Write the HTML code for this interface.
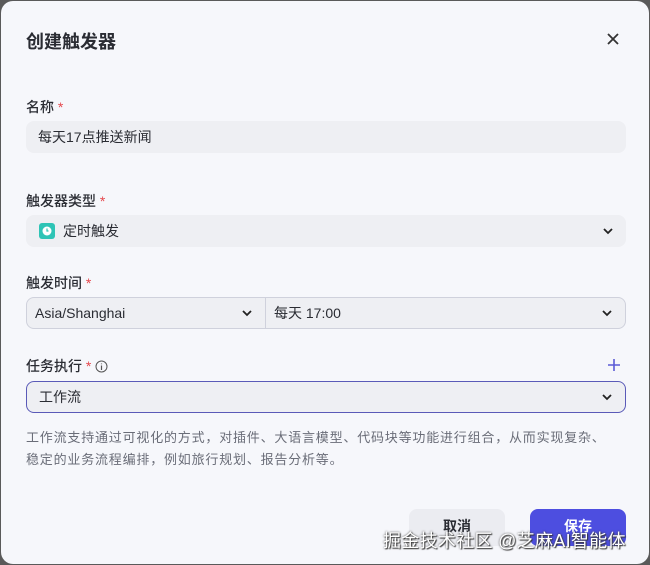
<!DOCTYPE html>
<html><head><meta charset="utf-8"><style>
*{box-sizing:border-box;margin:0;padding:0}
html,body{width:650px;height:565px;overflow:hidden;background:#5a5a5a;font-family:"Liberation Sans","Noto Sans CJK SC",sans-serif}
.dlg{position:absolute;left:1px;top:1px;width:648px;height:563px;background:#f6f7fb;border-radius:12px;overflow:hidden;color:#1f2329}
.t{position:absolute;left:25px;top:27px;font-size:18px;font-weight:600;color:#2a2c33}
.x{position:absolute;left:605px;top:31px}
.lb{position:absolute;left:25px;font-size:14px;font-weight:500;color:#2a2c33}
.lb b{color:#e5484d;font-weight:500}
.in{position:absolute;left:25px;width:600px;height:32px;background:#eeeff3;border-radius:8px;font-size:14px;line-height:32px;padding-left:12px;color:#2a2c33}
.ch{position:absolute;right:12px;top:10px}
.sel{position:absolute;height:32px;background:#eeeff3;border:1px solid #cfd1dc;font-size:14px;line-height:30px;padding-left:8px;color:#2a2c33}
.desc{position:absolute;left:25px;top:426px;width:610px;font-size:13px;line-height:22px;color:#6a6d78;letter-spacing:0.8px;white-space:nowrap}
.btn{position:absolute;top:508px;height:37px;width:96px;border-radius:8px;font-size:14px;text-align:center;line-height:34px;font-weight:600}
.wm{position:absolute;left:382px;top:526px;font-size:18px;color:#fff;text-shadow:0 0 2px #444,1px 1px 1px #333;letter-spacing:0.3px}
</style></head><body><div class="dlg">
<div class="t">创建触发器</div>
<svg class="x" width="14" height="14" viewBox="0 0 14 14"><path d="M2 2L12 12M12 2L2 12" stroke="#333" stroke-width="1.8"/></svg>
<div class="lb" style="top:96px">名称 <b>*</b></div>
<div class="in" style="top:120px;">每天17点推送新闻</div>
<div class="lb" style="top:190px">触发器类型 <b>*</b></div>
<div class="in" style="top:214px;padding-left:37px">定时触发
<svg style="position:absolute;left:13px;top:8px" width="16" height="16"><rect width="16" height="16" rx="3" fill="#2ec4b6"/><circle cx="8" cy="8" r="4.5" fill="#fff"/><path d="M8 5.5V8H9.5" stroke="#2ec4b6" stroke-width="1.2" fill="none"/></svg>
<svg class="ch" width="12" height="12"><path d="M2 4L6 8L10 4" stroke="#222" stroke-width="1.8" fill="none"/></svg></div>
<div class="lb" style="top:272px">触发时间 <b>*</b></div>
<div class="sel" style="left:25px;top:296px;width:240px;border-radius:8px 0 0 8px">Asia/Shanghai<svg class="ch" style="top:9px" width="12" height="12"><path d="M2 4L6 8L10 4" stroke="#222" stroke-width="1.8" fill="none"/></svg></div>
<div class="sel" style="left:264px;top:296px;width:361px;border-radius:0 8px 8px 0">每天 17:00<svg class="ch" style="top:9px" width="12" height="12"><path d="M2 4L6 8L10 4" stroke="#222" stroke-width="1.8" fill="none"/></svg></div>
<div class="lb" style="top:355px">任务执行 <b>*</b> <svg style="vertical-align:-2px" width="13" height="13"><circle cx="6.5" cy="6.5" r="5.5" stroke="#555" fill="none"/><path d="M6.5 5.5V10M6.5 3.5V4.3" stroke="#555" stroke-width="1.2"/></svg></div>
<svg style="position:absolute;left:606px;top:357px" width="14" height="14"><path d="M7 1V13M1 7H13" stroke="#5b5bd6" stroke-width="1.6"/></svg>
<div class="sel" style="left:25px;top:380px;width:600px;border-radius:8px;border:1px solid #5a5ab8;padding-left:12px">工作流<svg class="ch" style="top:9px" width="12" height="12"><path d="M2 4L6 8L10 4" stroke="#222" stroke-width="1.8" fill="none"/></svg></div>
<div class="desc">工作流支持通过可视化的方式，对插件、大语言模型、代码块等功能进行组合，从而实现复杂、<br>稳定的业务流程编排，例如旅行规划、报告分析等。</div>
<div class="btn" style="left:408px;background:#ebecf1;color:#2a2c33">取消</div>
<div class="btn" style="left:529px;background:#4d4ee0;color:#fff">保存</div>
<div class="wm">掘金技术社区 @芝麻AI智能体</div>
</div></body></html>
